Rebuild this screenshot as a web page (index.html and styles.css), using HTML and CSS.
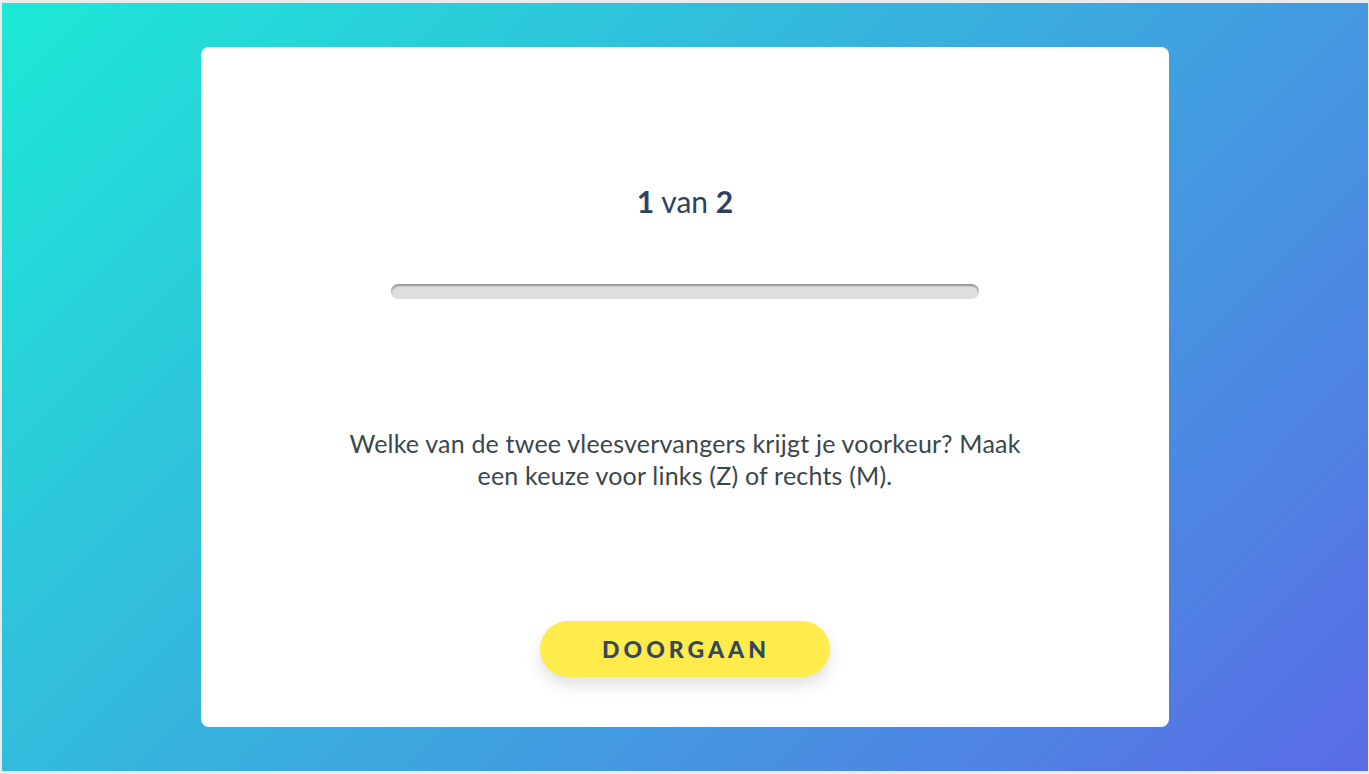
FILE: index.html
```html
<!DOCTYPE html>
<html lang="nl">
<head>
<meta charset="utf-8">
<title>Keuze</title>
<link rel="stylesheet" href="styles.css">
</head>
<body>
<main class="stage">
  <section class="card">
    <h1 class="counter"><strong>1</strong> van <strong>2</strong></h1>
    <div class="progress"><div class="progress-fill" style="width:0%"></div></div>
    <p class="question">Welke van de twee vleesvervangers krijgt je voorkeur? Maak een keuze voor links (Z) of rechts (M).</p>
    <button class="btn" type="button">DOORGAAN</button>
  </section>
</main>
</body>
</html>
```
FILE: styles.css
```css
html, body {
  margin: 0;
  padding: 0;
  height: 100%;
}
body {
  background: #ebebeb;
  padding: 3px 1px 3px 2px;
  box-sizing: border-box;
  font-family: Lato, "Open Sans", sans-serif;
}
.stage {
  height: 100%;
  background: linear-gradient(135deg, #1ce9d6 0%, #5a6be6 100%);
  display: flex;
  align-items: center;
  justify-content: center;
}
.card {
  width: 968px;
  height: 680px;
  background: #fff;
  border-radius: 8px;
  box-sizing: border-box;
  padding-top: 138px;
  display: flex;
  flex-direction: column;
  align-items: center;
}
.counter {
  margin: 0;
  font-size: 30px;
  line-height: 32px;
  font-weight: 400;
  color: #2e4260;
}
.counter strong {
  font-weight: 700;
}
.progress {
  margin-top: 67px;
  width: 588px;
  height: 15px;
  border-radius: 8px;
  background: #dedede;
  box-shadow: inset 0 2px 2px rgba(0,0,0,0.35);
  overflow: hidden;
}
.progress-fill {
  height: 100%;
  background: #2e4260;
}
.question {
  margin: 128px 0 0;
  width: 690px;
  text-align: center;
  font-size: 25px;
  letter-spacing: 0.2px;
  line-height: 32px;
  color: #3a474d;
}
.btn {
  margin-top: 130px;
  width: 290px;
  height: 56px;
  border: 0;
  border-radius: 28px;
  background: #ffeb4b;
  color: #33475f;
  font-family: Lato, "Open Sans", sans-serif;
  font-size: 23px;
  font-weight: 900;
  letter-spacing: 4px;
  padding: 0 0 0 2px;
  box-shadow: 0 8px 16px rgba(0,0,0,0.12);
  cursor: pointer;
}
```
